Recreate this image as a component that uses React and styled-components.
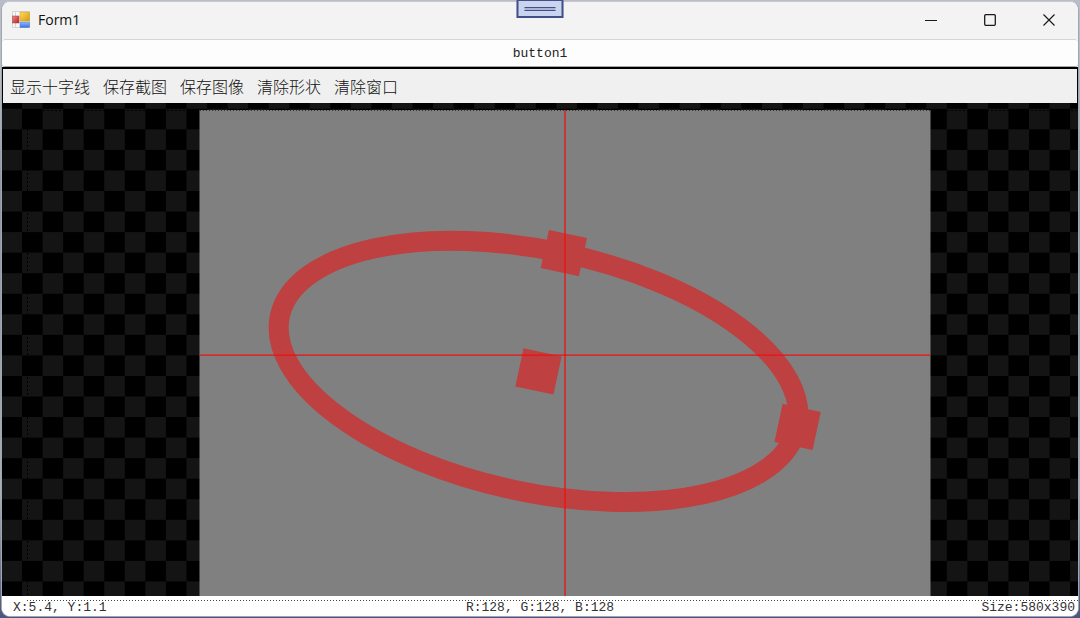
import React, { useState } from 'react';
import styled, { createGlobalStyle } from 'styled-components';

const GlobalStyle = createGlobalStyle`
  * {
    box-sizing: border-box;
  }

  body {
    margin: 0;
    background: #59648c;
  }
`;

const Desktop = styled.div`
  position: relative;
  height: 100vh;
  padding: 1px;
  background: linear-gradient(#b9bdca, #b9bdca 12%, #8d94ab 30%, #a9adb9 80%, #4a5480);
`;

const Window = styled.main`
  display: flex;
  flex-direction: column;
  height: 100%;
  border: 1px solid #a4a6ae;
  border-top-color: #c8cad2;
  border-radius: 9px;
  overflow: hidden;
  background: #fff;
`;

const TitleBar = styled.header`
  display: flex;
  align-items: center;
  flex: none;
  height: 37px;
  padding: 0 0 2px 10px;
  background: #f3f3f3;
`;

const Title = styled.h1`
  flex: 1;
  margin: 0 0 0 8px;
  font: 400 14px/19px 'Open Sans', 'Noto Sans', sans-serif;
  color: #111;
`;

const CaptionButton = styled.button`
  display: flex;
  align-items: center;
  justify-content: center;
  width: 59px;
  height: 35px;
  padding: 0;
  border: none;
  background: transparent;
  color: #1a1a1a;

  &:hover {
    background: #e2e2e2;
  }
`;

/* Floats over the top edge of the window */
const DebugHandle = styled.button`
  position: absolute;
  top: 0;
  left: 50%;
  display: flex;
  flex-direction: column;
  justify-content: center;
  align-items: center;
  width: 47px;
  height: 18px;
  padding: 0;
  transform: translateX(-50%);
  border: 2px solid #454f87;
  border-top-width: 1px;
  background: #c9d4ef;
`;

const Grip = styled.span`
  width: 31px;
  height: 4px;
  border: solid #454f87;
  border-width: 1px 0;
  background: #aab4d6;
`;

const WideButton = styled.button`
  flex: none;
  height: 28px;
  padding: 2px 0 0;
  border: solid #d6d6d6;
  border-width: 1px 0;
  border-bottom-color: #a6a6a6;
  border-radius: 3px;
  background: #fdfdfd;
  color: #222;
  font: 13px/16px 'Liberation Mono', monospace;
`;

const Toolbar = styled.nav`
  display: flex;
  align-items: center;
  flex: none;
  gap: 13px;
  height: 36px;
  padding: 0 7px;
  border: solid #000;
  border-width: 2px 1px 0;
  background: #f0f0f0;
`;

const ToolButton = styled.button`
  padding: 0;
  border: none;
  background: transparent;
  color: #111;
  font: 300 16px/24px 'Noto Sans CJK SC', sans-serif;
  white-space: nowrap;
`;

const Viewport = styled.section`
  flex: 1;
  min-height: 0;
  background: #000;
`;

const Scene = styled.svg`
  display: block;
  width: 100%;
  height: 100%;
`;

const StatusBar = styled.footer`
  position: relative;
  display: grid;
  grid-template-columns: 1fr auto 1fr;
  flex: none;
  height: 20px;
  padding-top: 4px;
  background: #fff;
  color: #333;
  font: 13px/16px 'Liberation Mono', monospace;

  &::before {
    content: '';
    position: absolute;
    top: 4px;
    left: 25px;
    right: 0;
    height: 1px;
    background: repeating-linear-gradient(90deg, #444 0 1px, transparent 1px 3px);
  }
`;

const Status = styled.span`
  padding: ${({ $align }) => ($align ? '0 3px 0 0' : '0 0 0 11px')};
  text-align: ${({ $align }) => $align || 'left'};
  white-space: nowrap;
`;

const PixelStatus = styled(Status)`
  padding: 0;
`;

const tools = ['显示十字线', '保存截图', '保存图像', '清除形状', '清除窗口'];

function AppIcon() {
  return (
    <svg width="18" height="17" viewBox="0 0 18 17">
      <defs>
        <linearGradient id="gold" x2="1" y2="1">
          <stop stopColor="#ffd96b" />
          <stop offset="1" stopColor="#d89b00" />
        </linearGradient>
        <linearGradient id="rose" x2="1" y2="1">
          <stop stopColor="#f08b84" />
          <stop offset="1" stopColor="#b91d1d" />
        </linearGradient>
        <linearGradient id="sky" x2="0" y2="1">
          <stop stopColor="#93b8ff" />
          <stop offset="1" stopColor="#3a72dc" />
        </linearGradient>
      </defs>
      <path d="M.5 .5h17v16h-17z M3.5 .5v16" fill="#f7f7f7" stroke="#d3d3d8" />
      <rect x="8" y="1" width="9.5" height="9" fill="url(#gold)" stroke="#c99a20" strokeWidth=".5" />
      <rect x=".5" y="5" width="6.5" height="7" fill="url(#rose)" stroke="#b04040" strokeWidth=".5" />
      <rect x="8" y="11" width="9.5" height="5.5" fill="url(#sky)" stroke="#4a78cc" strokeWidth=".5" />
    </svg>
  );
}

function EllipseScene({ showCross }) {
  return (
    <Scene viewBox="2 103 1076 493" preserveAspectRatio="xMidYMid slice" role="img" aria-label="ellipse">
      <defs>
        <pattern id="checker" x="1.5" y="108.8" width="41.1" height="41.1" patternUnits="userSpaceOnUse">
          <rect width="41.1" height="41.1" fill="#000" />
          <rect width="20.55" height="20.55" fill="#141414" />
          <rect x="20.55" y="20.55" width="20.55" height="20.55" fill="#141414" />
        </pattern>
      </defs>
      <rect x="2" y="103" width="1076" height="493" fill="url(#checker)" />
      <path d="M27 110.5H1078 M27.5 129V596" stroke="#000" strokeDasharray="2 2" fill="none" />
      <rect x="199.5" y="110" width="731" height="486" fill="#808080" />
      <path d="M200 110.5H930" stroke="#333" strokeDasharray="1 2" />
      <g transform="translate(538.5 371.4) rotate(12.1)">
        <ellipse rx="264.5" ry="121" fill="none" stroke="#be4040" strokeWidth="20" />
        <g fill="#be4040">
          <rect x="-19.5" y="-19.5" width="39" height="39" />
          <rect x="-19.5" y="-140.5" width="39" height="39" />
          <rect x="245.5" y="-19.5" width="39" height="39" />
        </g>
      </g>
      {showCross && <path d="M565 110V596 M199.5 355.2H930.5" stroke="#ee1010" strokeWidth="1.3" />}
    </Scene>
  );
}

function App() {
  const [showCross, setShowCross] = useState(true);

  return (
    <Desktop>
      <GlobalStyle />
      <Window>
        <TitleBar>
          <AppIcon />
          <Title>Form1</Title>
          <CaptionButton aria-label="Minimize">
            <svg width="12" height="12" stroke="currentColor">
              <path d="M0 6.5h12" />
            </svg>
          </CaptionButton>
          <CaptionButton aria-label="Maximize">
            <svg width="12" height="12" fill="none" stroke="currentColor">
              <rect x=".7" y=".7" width="10.6" height="10.6" rx="1" strokeWidth="1.3" />
            </svg>
          </CaptionButton>
          <CaptionButton aria-label="Close">
            <svg width="12" height="12" stroke="currentColor">
              <path d="M.5 .5l11 11M11.5 .5l-11 11" strokeWidth="1.2" />
            </svg>
          </CaptionButton>
        </TitleBar>
        <WideButton>button1</WideButton>
        <Toolbar>
          {tools.map((tool, i) => (
            <ToolButton key={tool} onClick={i === 0 ? () => setShowCross(!showCross) : undefined}>
              {tool}
            </ToolButton>
          ))}
        </Toolbar>
        <Viewport>
          <EllipseScene showCross={showCross} />
        </Viewport>
        <StatusBar>
          <Status>X:5.4, Y:1.1</Status>
          <PixelStatus>R:128, G:128, B:128</PixelStatus>
          <Status $align="right">Size:580x390</Status>
        </StatusBar>
      </Window>
      <DebugHandle aria-label="Debug toolbar">
        <Grip />
      </DebugHandle>
    </Desktop>
  );
}

export default App;
